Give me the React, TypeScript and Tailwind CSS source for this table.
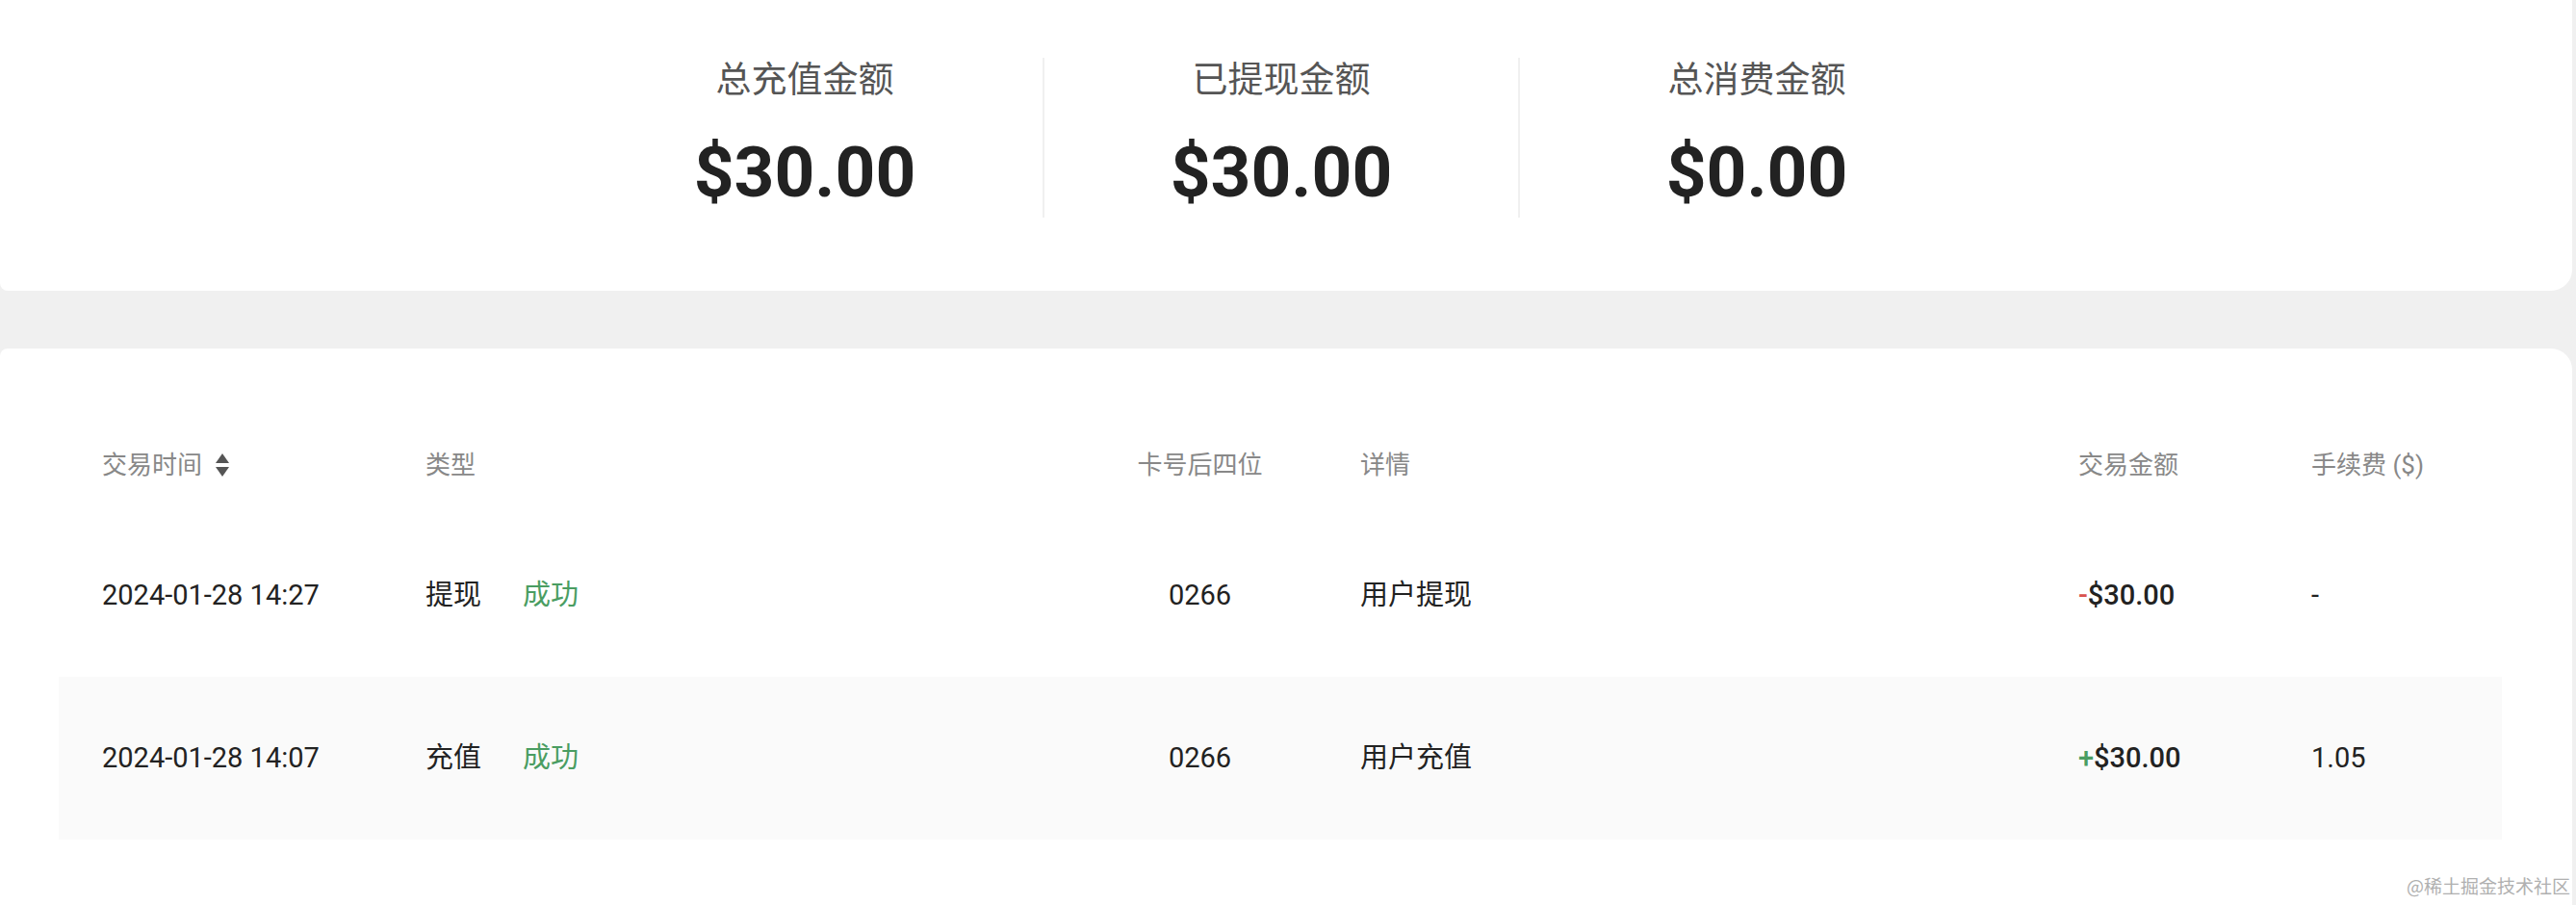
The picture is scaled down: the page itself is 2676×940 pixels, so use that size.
const rows = [
  { time: '2024-01-28 14:27', type: '提现', status: '成功', card: '0266', detail: '用户提现', sign: '-', amount: '$30.00', fee: '-' },
  { time: '2024-01-28 14:07', type: '充值', status: '成功', card: '0266', detail: '用户充值', sign: '+', amount: '$30.00', fee: '1.05' },
];

const stats = [
  { label: '总充值金额', value: '$30.00' },
  { label: '已提现金额', value: '$30.00' },
  { label: '总消费金额', value: '$0.00' },
];

const font = { fontFamily: 'Roboto, "Noto Sans CJK SC", sans-serif' };
const grid = 'grid grid-cols-[336px_638px_333px_746px_242px_1fr] items-center pl-[45px]';

function SortIcon() {
  return (
    <svg width="16" height="25" viewBox="0 0 16 25" className="ml-[13px]">
      <path d="M8 0 L15 10 L1 10 Z" fill="#555" />
      <path d="M1 14 L15 14 L8 24 Z" fill="#555" />
    </svg>
  );
}

export default function App() {
  return (
    <div className="relative w-[2676px] h-[940px] overflow-hidden bg-[#f0f0f0]" style={font}>
      {/* Summary */}
      <div className="w-[2672px] h-[302px] bg-white rounded-br-[22px] rounded-bl-[8px] flex justify-center pt-[60px] pr-[12px]">
        {stats.map((s, i) => (
          <div
            key={s.label}
            className={`w-[494px] h-[166px] flex flex-col items-center ${i > 0 ? 'border-l-2 border-[#f0f0f0]' : ''}`}
          >
            <div className="text-[37px] leading-[48px] text-[#555]">{s.label}</div>
            <div className="mt-[31px] text-[73px] leading-[80px] font-bold text-[#222]">{s.value}</div>
          </div>
        ))}
      </div>

      {/* Transactions */}
      <div className="mt-[60px] w-[2672px] h-[600px] bg-white rounded-tr-[22px] rounded-tl-[8px] pt-[71px] pl-[61px]">
        <div className="w-[2538px]">
          <div className={`${grid} h-[101px] text-[26px] text-[#888]`}>
            <div className="flex items-center">
              交易时间
              <SortIcon />
            </div>
            <div>类型</div>
            <div className="text-center">卡号后四位</div>
            <div>详情</div>
            <div>交易金额</div>
            <div>手续费 ($)</div>
          </div>
          {rows.map((r, i) => (
            <div
              key={r.time}
              className={`${grid} h-[169px] text-[29px] text-[#222] ${i % 2 === 1 ? 'bg-[#fafafa]' : ''}`}
            >
              <div>{r.time}</div>
              <div className="flex gap-[43px]">
                <span>{r.type}</span>
                <span className="text-[#4a9d62]">{r.status}</span>
              </div>
              <div className="text-center">{r.card}</div>
              <div>{r.detail}</div>
              <div className="font-medium">
                <span className={r.sign === '-' ? 'text-[#d9534f]' : 'text-[#4a9d62]'}>{r.sign}</span>
                {r.amount}
              </div>
              <div>{r.fee}</div>
            </div>
          ))}
        </div>
      </div>

      <div className="absolute right-[6px] bottom-[6px] text-[19px] text-[#b0b0b0]" style={{ fontFamily: '"Noto Sans CJK SC", sans-serif' }}>
        @稀土掘金技术社区
      </div>
    </div>
  );
}
